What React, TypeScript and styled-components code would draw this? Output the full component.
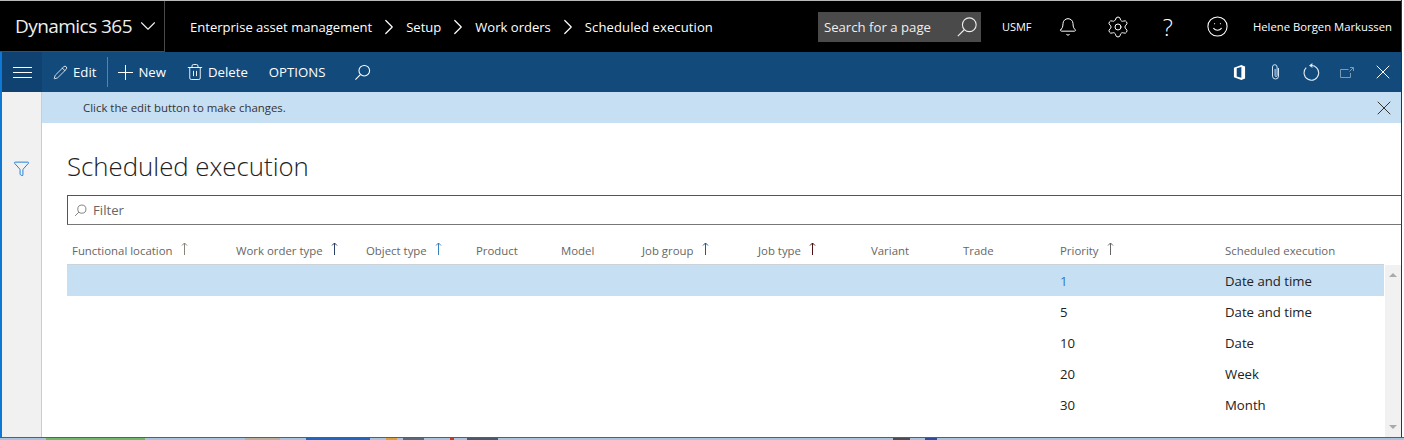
import React from "react";
import styled, { createGlobalStyle } from "styled-components";
import { Bell, ChevronDown, ChevronRight, Funnel, Pencil, Settings, Smile, Trash2, X } from "lucide-react";

const GlobalStyle = createGlobalStyle`
  html, body {
    margin: 0;
    padding: 0;
    background: #fff;
    overflow: hidden;
  }

  * {
    box-sizing: border-box;
  }
`;

const Page = styled.div`
  width: 1404px;
  height: 440px;
  display: flex;
  flex-direction: column;
  overflow: hidden;
  font-family: "Open Sans", "Noto Sans", sans-serif;
  color: #222;
  background: #fff;
`;

const AppWindow = styled.div`
  width: 1402px;
  height: 437px;
  flex: none;
  display: flex;
  flex-direction: column;
  border-right: 1px solid #333;
`;

const TopEdge = styled.div`
  height: 1px;
  flex: none;
  background: #b9b9b9;
`;

const Header = styled.header`
  height: 51px;
  flex: none;
  display: flex;
  align-items: center;
  background: #000;
  color: #fff;
`;

const Brand = styled.div`
  width: 165px;
  height: 51px;
  flex: none;
  display: flex;
  align-items: center;
  gap: 3px;
  padding-left: 15px;
  border-right: 1px solid #4a4a4a;
  border-bottom: 1px solid #4a4a4a;
  font-size: 19px;
  letter-spacing: -0.55px;
  white-space: nowrap;
  color: #eee;
`;

const Breadcrumb = styled.nav`
  display: flex;
  align-items: center;
  gap: 4px;
  padding-left: 25px;
  font-size: 13.05px;
`;

const CurrentPage = styled.span`
  letter-spacing: 0.1px;
`;

const HeaderTools = styled.div`
  margin-left: auto;
  display: flex;
  align-items: center;
  padding-right: 9px;
`;

const PageSearch = styled.div`
  width: 163px;
  height: 30px;
  display: flex;
  align-items: center;
  justify-content: space-between;
  padding: 0 3px 0 6px;
  background: #4a4a4a;
  font-size: 13.2px;
  color: #eee;
`;

const Company = styled.span`
  margin-left: 21px;
  width: 41px;
  font-size: 11px;
`;

const ToolSlot = styled.span`
  width: 50px;
  height: 26px;
  display: flex;
  align-items: center;
  justify-content: center;
  font-size: 24px;
  font-weight: 300;
  line-height: 26px;
`;

const UserName = styled.span`
  margin-left: 10px;
  font-size: 11.3px;
  white-space: nowrap;
`;

const Frame = styled.div`
  flex: 1;
  min-height: 0;
  display: flex;
  flex-direction: column;
  border-left: 2px solid #0f78d4;
`;

const ActionBar = styled.div`
  height: 40px;
  flex: none;
  display: flex;
  align-items: center;
  background: #124a7c;
  color: #fff;
  font-size: 13.2px;
`;

const MenuButton = styled.div`
  width: 40px;
  height: 40px;
  display: flex;
  flex-direction: column;
  align-items: center;
  justify-content: center;
  gap: 4px;
  background: #0f4270;

  i {
    display: block;
    width: 19px;
    height: 1px;
    background: #fff;
  }
`;

const Action = styled.div<{ $gap?: number; $left?: number }>`
  display: flex;
  align-items: center;
  gap: ${(p) => p.$gap ?? 5}px;
  margin-left: ${(p) => p.$left ?? 0}px;
`;

const Divider = styled.span`
  width: 1px;
  height: 30px;
  margin: 0 10px 0 11px;
  background: #5b82a5;
`;

const BarEnd = styled.div`
  margin-left: auto;
  display: flex;
  align-items: center;
`;

const BarSlot = styled.span`
  width: 36px;
  display: flex;
  align-items: center;
  justify-content: center;
`;

const Body = styled.div`
  flex: 1;
  min-height: 0;
  display: flex;
`;

const Rail = styled.aside`
  width: 40px;
  flex: none;
  padding-top: 68px;
  display: flex;
  justify-content: center;
  align-items: flex-start;
  background: #f1f1f1;
  border-right: 1px solid #ccc;
  color: #0f78d4;
`;

const Main = styled.main`
  flex: 1;
  min-width: 0;
  display: flex;
  flex-direction: column;
`;

const Message = styled.div`
  height: 31px;
  flex: none;
  display: flex;
  align-items: center;
  justify-content: space-between;
  padding: 0 5px 0 41px;
  background: #c7dff3;
  font-size: 11.4px;
  color: #333;
`;

const Content = styled.div`
  flex: 1;
  min-height: 0;
  display: flex;
  flex-direction: column;
  padding-left: 25px;
`;

const Title = styled.h1`
  margin: 22px 0 0;
  height: 50px;
  flex: none;
  font-size: 25.8px;
  font-weight: 300;
  line-height: 42px;
  color: #222;
`;

const FilterBox = styled.div`
  height: 30px;
  flex: none;
  display: flex;
  align-items: center;
  gap: 6px;
  padding-left: 6px;
  border: 1px solid #555;
  border-right: 0;
  border-bottom-color: #777;
  font-size: 13.2px;
  color: #666;
`;

const Columns = styled.div`
  display: grid;
  grid-template-columns: 164px 130px 110px 85px 81px 116px 113px 92px 97px 165px 164px;
`;

const HeadRow = styled(Columns)`
  width: 1317px;
  height: 40px;
  flex: none;
  border-bottom: 1px solid #ccd4da;
`;

const HeadCell = styled.div`
  display: flex;
  align-items: center;
  gap: 7px;
  padding: 11px 0 0 5px;
  font-size: 11.4px;
  color: #666;
  white-space: nowrap;
`;

const SortMark = styled.span<{ $color: string }>`
  display: flex;
  margin-top: -3px;
  color: ${(p) => p.$color};
`;

const GridArea = styled.div`
  flex: 1;
  min-height: 0;
  display: flex;
  gap: 1px;
`;

const Rows = styled.div`
  width: 1317px;
  flex: none;
`;

const Row = styled(Columns)<{ $selected?: boolean }>`
  height: 31px;
  background: ${(p) => (p.$selected ? "#c7dff3" : "transparent")};
`;

const Cell = styled.div<{ $link?: boolean }>`
  display: flex;
  align-items: center;
  padding-left: 5px;
  font-size: 13.2px;
  color: ${(p) => (p.$link ? "#2b79bd" : "#222")};
`;

const Scrollbar = styled.div`
  flex: 1;
  display: flex;
  flex-direction: column;
  justify-content: space-between;
  align-items: center;
  padding: 8px 0;
  background: #f1f1f1;
`;

const ScrollArrow = styled.span<{ $down?: boolean }>`
  width: 0;
  height: 0;
  border-left: 4px solid transparent;
  border-right: 4px solid transparent;
  border-${(p) => (p.$down ? "top" : "bottom")}: 4px solid #aaa;
`;

const BottomEdge = styled.div`
  height: 1px;
  flex: none;
  background: #37688f;
`;

const Taskbar = styled.div`
  height: 2px;
  flex: none;
  display: flex;
  background: #a9c4dc;
`;

const TaskItem = styled.span<{ $width: number; $color?: string }>`
  width: ${(p) => p.$width}px;
  flex: none;
  background: ${(p) => p.$color ?? "transparent"};
`;

const SearchGlyph: React.FC<{ size: number }> = ({ size }) => (
  <svg width={size} height={size} viewBox="0 0 24 24" fill="none" stroke="currentColor" strokeWidth={size > 20 ? 1.2 : 1.5}>
    <circle cx="14.5" cy="9.5" r="7.5"/>
    <path d="M9 15 2 22"/>
  </svg>
);

const PlusGlyph: React.FC = () => (
  <svg width="15" height="15" viewBox="0 0 15 15" fill="none" stroke="currentColor">
    <path d="M7.500 0v15M0 7.500h15"/>
  </svg>
);

const OfficeGlyph: React.FC = () => (
  <svg width="13" height="15" viewBox="0 0 14 16">
    <path fill="#fff" fillRule="evenodd" d="M1 3 9 0l4 1.500v13L9 16l-8-3zM9 2 4 3.500v8.700L9 13.600z"/>
  </svg>
);

const ClipGlyph: React.FC = () => (
  <svg width="9" height="16" viewBox="0 0 9 16" fill="none" stroke="#cfe4f5">
    <path d="M7.500 4v8a3 3 0 0 1-6 0V3a2.300 2.300 0 0 1 4.600 0v8.500a1 1 0 0 1-2 0V5"/>
  </svg>
);

const RefreshGlyph: React.FC = () => (
  <svg width="17" height="18" viewBox="0 0 17 18" fill="none" stroke="#e4eef6" strokeWidth="1.100">
    <path d="M7.500 2.600A7.300 7.300 0 1 1 3.200 4.700"/>
    <path d="M9.500.8 7 2.600l2.500 1.800"/>
  </svg>
);

const PopoutGlyph: React.FC = () => (
  <svg width="14" height="11" viewBox="0 0 14 11" fill="none" stroke="#7d9ab5">
    <path d="M8.500 2.500h-8v8h10V6M10 .5h3.500V4M13 1 9.500 4.500"/>
  </svg>
);

const SortArrow: React.FC<{ color: string }> = ({ color }) => (
  <SortMark $color={color}>
    <svg width="9" height="13" viewBox="0 0 9 13" fill="none" stroke="currentColor">
      <path d="M4.500 13V1M2 3.500 4.500 1 7 3.500"/>
    </svg>
  </SortMark>
);

const heads: [string, string?][] = [
  ["Functional location", "#8a8178"],
  ["Work order type", "#2a3f66"],
  ["Object type", "#3a80bd"],
  ["Product"],
  ["Model"],
  ["Job group", "#20598f"],
  ["Job type", "#4a1212"],
  ["Variant"],
  ["Trade"],
  ["Priority", "#666"],
  ["Scheduled execution"],
];

const rows = [
  ["1", "Date and time"],
  ["5", "Date and time"],
  ["10", "Date"],
  ["20", "Week"],
  ["30", "Month"],
];

// bits of the desktop taskbar that show under the window
const taskItems: [number, string?][] = [
  [46], [99, "#6cbb6c"], [100], [35, "#b8b0a0"], [26], [64, "#1e66c0"], [16],
  [11, "#d9a040"], [6], [21, "#5a6a7a"], [26], [4, "#c0392b"], [13], [31, "#4a5a6a"],
  [395], [17, "#4a4f55"], [15], [12, "#2b4fa0"],
];

const App: React.FC = () => {
  return (
    <Page>
      <GlobalStyle/>
      <AppWindow>
        <TopEdge/>
        <Header>
          <Brand>
            Dynamics 365
            <ChevronDown size={26} strokeWidth={1}/>
          </Brand>
          <Breadcrumb>
            <span>Enterprise asset management</span>
            <ChevronRight size={26} strokeWidth={1.100}/>
            <span>Setup</span>
            <ChevronRight size={26} strokeWidth={1.100}/>
            <span>Work orders</span>
            <ChevronRight size={26} strokeWidth={1.100}/>
            <CurrentPage>Scheduled execution</CurrentPage>
          </Breadcrumb>
          <HeaderTools>
            <PageSearch>
              Search for a page
              <SearchGlyph size={22}/>
            </PageSearch>
            <Company>USMF</Company>
            <ToolSlot><Bell size={20} strokeWidth={1.200}/></ToolSlot>
            <ToolSlot><Settings size={24} strokeWidth={1}/></ToolSlot>
            <ToolSlot>?</ToolSlot>
            <ToolSlot><Smile size={23} strokeWidth={1.100}/></ToolSlot>
            <UserName>Helene Borgen Markussen</UserName>
          </HeaderTools>
        </Header>
        <Frame>
          <ActionBar>
            <MenuButton><i/><i/><i/></MenuButton>
            <Action $left={11}>
              <Pencil size={15} strokeWidth={1.300}/>
              Edit
            </Action>
            <Divider/>
            <Action $gap={5}><PlusGlyph/>New</Action>
            <Action $left={20} $gap={4}><Trash2 size={18} strokeWidth={1.200}/>Delete</Action>
            <Action $left={21}>OPTIONS</Action>
            <Action $left={29}><SearchGlyph size={17}/></Action>
            <BarEnd>
              <BarSlot><OfficeGlyph/></BarSlot>
              <BarSlot><ClipGlyph/></BarSlot>
              <BarSlot><RefreshGlyph/></BarSlot>
              <BarSlot><PopoutGlyph/></BarSlot>
              <BarSlot><X size={24} strokeWidth={1}/></BarSlot>
            </BarEnd>
          </ActionBar>
          <Body>
            <Rail><Funnel size={17} strokeWidth={1.300}/></Rail>
            <Main>
              <Message>
                Click the edit button to make changes.
                <X size={24} strokeWidth={1}/>
              </Message>
              <Content>
                <Title>Scheduled execution</Title>
                <FilterBox>
                  <SearchGlyph size={13}/>
                  Filter
                </FilterBox>
                <HeadRow>
                  {heads.map(([label, arrow]) => (
                    <HeadCell key={label}>
                      {label}
                      {arrow && <SortArrow color={arrow}/>}
                    </HeadCell>
                  ))}
                </HeadRow>
                <GridArea>
                  <Rows>
                    {rows.map(([priority, execution], i) => (
                      <Row key={priority} $selected={i === 0}>
                        <Cell/><Cell/><Cell/><Cell/><Cell/><Cell/><Cell/><Cell/><Cell/>
                        <Cell $link={i === 0}>{priority}</Cell>
                        <Cell>{execution}</Cell>
                      </Row>
                    ))}
                  </Rows>
                  <Scrollbar>
                    <ScrollArrow/>
                    <ScrollArrow $down/>
                  </Scrollbar>
                </GridArea>
              </Content>
            </Main>
          </Body>
        </Frame>
      </AppWindow>
      <BottomEdge/>
      <Taskbar>
        {taskItems.map(([width, color], i) => (
          <TaskItem key={i} $width={width} $color={color}/>
        ))}
      </Taskbar>
    </Page>
  );
};

export default App;
